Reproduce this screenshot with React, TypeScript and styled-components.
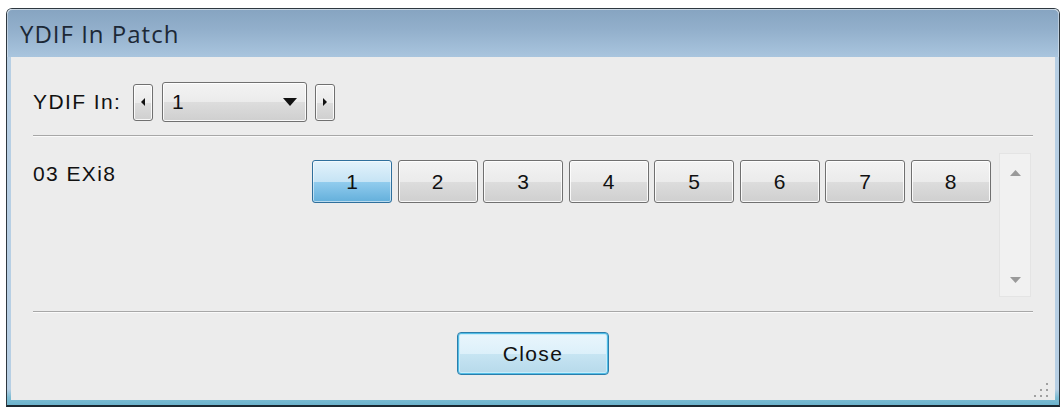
import React from "react";
import styled, { createGlobalStyle, css } from "styled-components";

const GlobalStyle = createGlobalStyle`
  html, body { margin: 0; padding: 0; background: #ffffff; }
  body { font-family: "Liberation Sans", Arial, sans-serif; }
  * { box-sizing: border-box; }
`;

const Page = styled.div`
  width: 1062px;
  height: 407px;
  padding: 8px 2px 0 6px;
  overflow: hidden;
`;

const Window = styled.div`
  width: 1054px;
  height: 399px;
  display: flex;
  flex-direction: column;
  border: 1px solid #2e3840;
  border-bottom: 2px solid #1b2830;
  border-radius: 6px 6px 0 0;
  background: linear-gradient(to bottom, #b7cfe4 0%, #b7cfe4 96%, #7fbdd4 98%, #6cb3cc 100%);
  padding: 0 4px 5px 4px;
`;

const TitleBar = styled.div`
  height: 48px;
  margin: 0 -4px;
  padding-left: 13px;
  display: flex;
  align-items: center;
  border-radius: 5px 5px 0 0;
  background: linear-gradient(to bottom, #86a4c1 0%, #93b0cc 45%, #a9c5de 100%);
  box-shadow: inset 0 1px 0 rgba(255, 255, 255, 0.55), inset -1px 0 0 rgba(255,255,255,0.4), inset 1px 0 0 rgba(255,255,255,0.4);
`;

const Title = styled.span`
  font-family: "Open Sans", "Liberation Sans", sans-serif;
  font-size: 24px;
  color: #1c2836;
  letter-spacing: 1px;
`;

const Client = styled.div`
  position: relative;
  flex: 1;
  background: #ececec;
  padding: 25px 22px 0 22px;
  display: flex;
  flex-direction: column;
`;

const Text = styled.span`
  font-size: 21px;
  letter-spacing: 1.4px;
  color: #111111;
  line-height: 24px;
`;

const ControlRow = styled.div`
  display: flex;
  align-items: center;
  height: 40px;
`;

const FieldLabel = styled(Text)`
  width: 100px;
`;

const chrome = css`
  border: 1px solid #707070;
  border-radius: 3px;
  background: linear-gradient(to bottom, #f3f3f3 0%, #ebebeb 50%, #dddddd 50%, #cfcfcf 100%);
  box-shadow: inset 0 0 0 1px rgba(255, 255, 255, 0.85);
`;

const StepButton = styled.div<{ $gap: number }>`
  ${chrome}
  width: 20px;
  height: 37px;
  margin-right: ${(p) => p.$gap}px;
  display: flex;
  align-items: center;
  justify-content: center;
`;

const Combo = styled.div`
  ${chrome}
  width: 145px;
  height: 40px;
  margin-right: 8px;
  display: flex;
  align-items: center;
  justify-content: space-between;
  padding: 0 9px 0 9px;
`;

const Separator = styled.div<{ $top: number }>`
  margin-top: ${(p) => p.$top}px;
  height: 2px;
  border-top: 1px solid #a7a7a7;
  border-bottom: 1px solid #fafafa;
`;

const PatchRow = styled.div`
  margin-top: 16px;
  height: 144px;
  display: flex;
  align-items: flex-start;
`;

const ChannelLabel = styled(Text)`
  width: 279px;
  margin-top: 9px;
`;

const ButtonGroup = styled.div`
  display: flex;
  gap: 5.5px;
  margin-top: 7px;
`;

const PatchButton = styled.div<{ $active?: boolean }>`
  ${chrome}
  width: 80px;
  height: 43px;
  display: flex;
  align-items: center;
  justify-content: center;
  font-size: 21px;
  color: #111;
  ${(p) =>
    p.$active &&
    css`
      border-color: #2f6f9c;
      background: linear-gradient(to bottom, #e3f2fb 0%, #c6e4f5 50%, #93cdee 50%, #63afdb 100%);
      box-shadow: inset 0 0 0 1px rgba(255, 255, 255, 0.55);
    `}
`;

const ScrollBar = styled.div`
  margin-left: auto;
  margin-right: 2px;
  width: 32px;
  height: 144px;
  background: #f1f1f1;
  border: 1px solid #e4e4e4;
  display: flex;
  flex-direction: column;
  justify-content: space-between;
  align-items: center;
  padding: 16px 0 13px 0;
`;

const Footer = styled.div`
  display: flex;
  justify-content: center;
  margin-top: 19px;
`;

const CloseButton = styled.div`
  width: 152px;
  height: 43px;
  border: 1px solid #2b7eab;
  border-radius: 4px;
  background: linear-gradient(to bottom, #eaf6fc 0%, #dcf0fa 50%, #c7e5f3 50%, #b6d9ea 100%);
  box-shadow: inset 0 0 0 1px #52bde6, inset 0 0 0 2px #c8ecfa;
  display: flex;
  align-items: center;
  justify-content: center;
  font-size: 21px;
  letter-spacing: 1.4px;
  color: #111111;
`;

const Grip = styled.svg`
  position: absolute;
  right: 6px;
  bottom: 3px;
`;

const Tri = ({ dir, w, h, color }: { dir: "l" | "r" | "u" | "d"; w: number; h: number; color: string }) => {
  const pts =
    dir === "l"
      ? `${w},0 ${w},${h} 0,${h / 2}`
      : dir === "r"
      ? `0,0 0,${h} ${w},${h / 2}`
      : dir === "u"
      ? `0,${h} ${w},${h} ${w / 2},0`
      : `0,0 ${w},0 ${w / 2},${h}`;
  return (
    <svg width={w} height={h} viewBox={`0 0 ${w} ${h}`}>
      <polygon points={pts} fill={color} />
    </svg>
  );
};

export default function App() {
  const channels = [1, 2, 3, 4, 5, 6, 7, 8];
  return (
    <>
      <GlobalStyle />
      <Page>
        <Window>
          <TitleBar>
            <Title>YDIF In Patch</Title>
          </TitleBar>
          <Client>
            <ControlRow>
              <FieldLabel>YDIF In:</FieldLabel>
              <StepButton $gap={9}>
                <Tri dir="l" w={4} h={8} color="#111" />
              </StepButton>
              <Combo>
                <Text>1</Text>
                <Tri dir="d" w={14} h={8} color="#111" />
              </Combo>
              <StepButton $gap={0}>
                <Tri dir="r" w={4} h={8} color="#111" />
              </StepButton>
            </ControlRow>
            <Separator $top={13} />
            <PatchRow>
              <ChannelLabel>03 EXi8</ChannelLabel>
              <ButtonGroup>
                {channels.map((c) => (
                  <PatchButton key={c} $active={c === 1}>
                    {c}
                  </PatchButton>
                ))}
              </ButtonGroup>
              <ScrollBar>
                <Tri dir="u" w={11} h={6} color="#9a9a9a" />
                <Tri dir="d" w={11} h={6} color="#9a9a9a" />
              </ScrollBar>
            </PatchRow>
            <Separator $top={14} />
            <Footer>
              <CloseButton>Close</CloseButton>
            </Footer>
            <Grip width="16" height="16" viewBox="0 0 16 16">
              {[
                [13, 2],
                [7, 8],
                [13, 8],
                [1, 14],
                [7, 14],
                [13, 14],
              ].map(([x, y], i) => (
                <rect key={i} x={x} y={y} width="2" height="2" fill="#a0a0a0" />
              ))}
            </Grip>
          </Client>
        </Window>
      </Page>
    </>
  );
}
